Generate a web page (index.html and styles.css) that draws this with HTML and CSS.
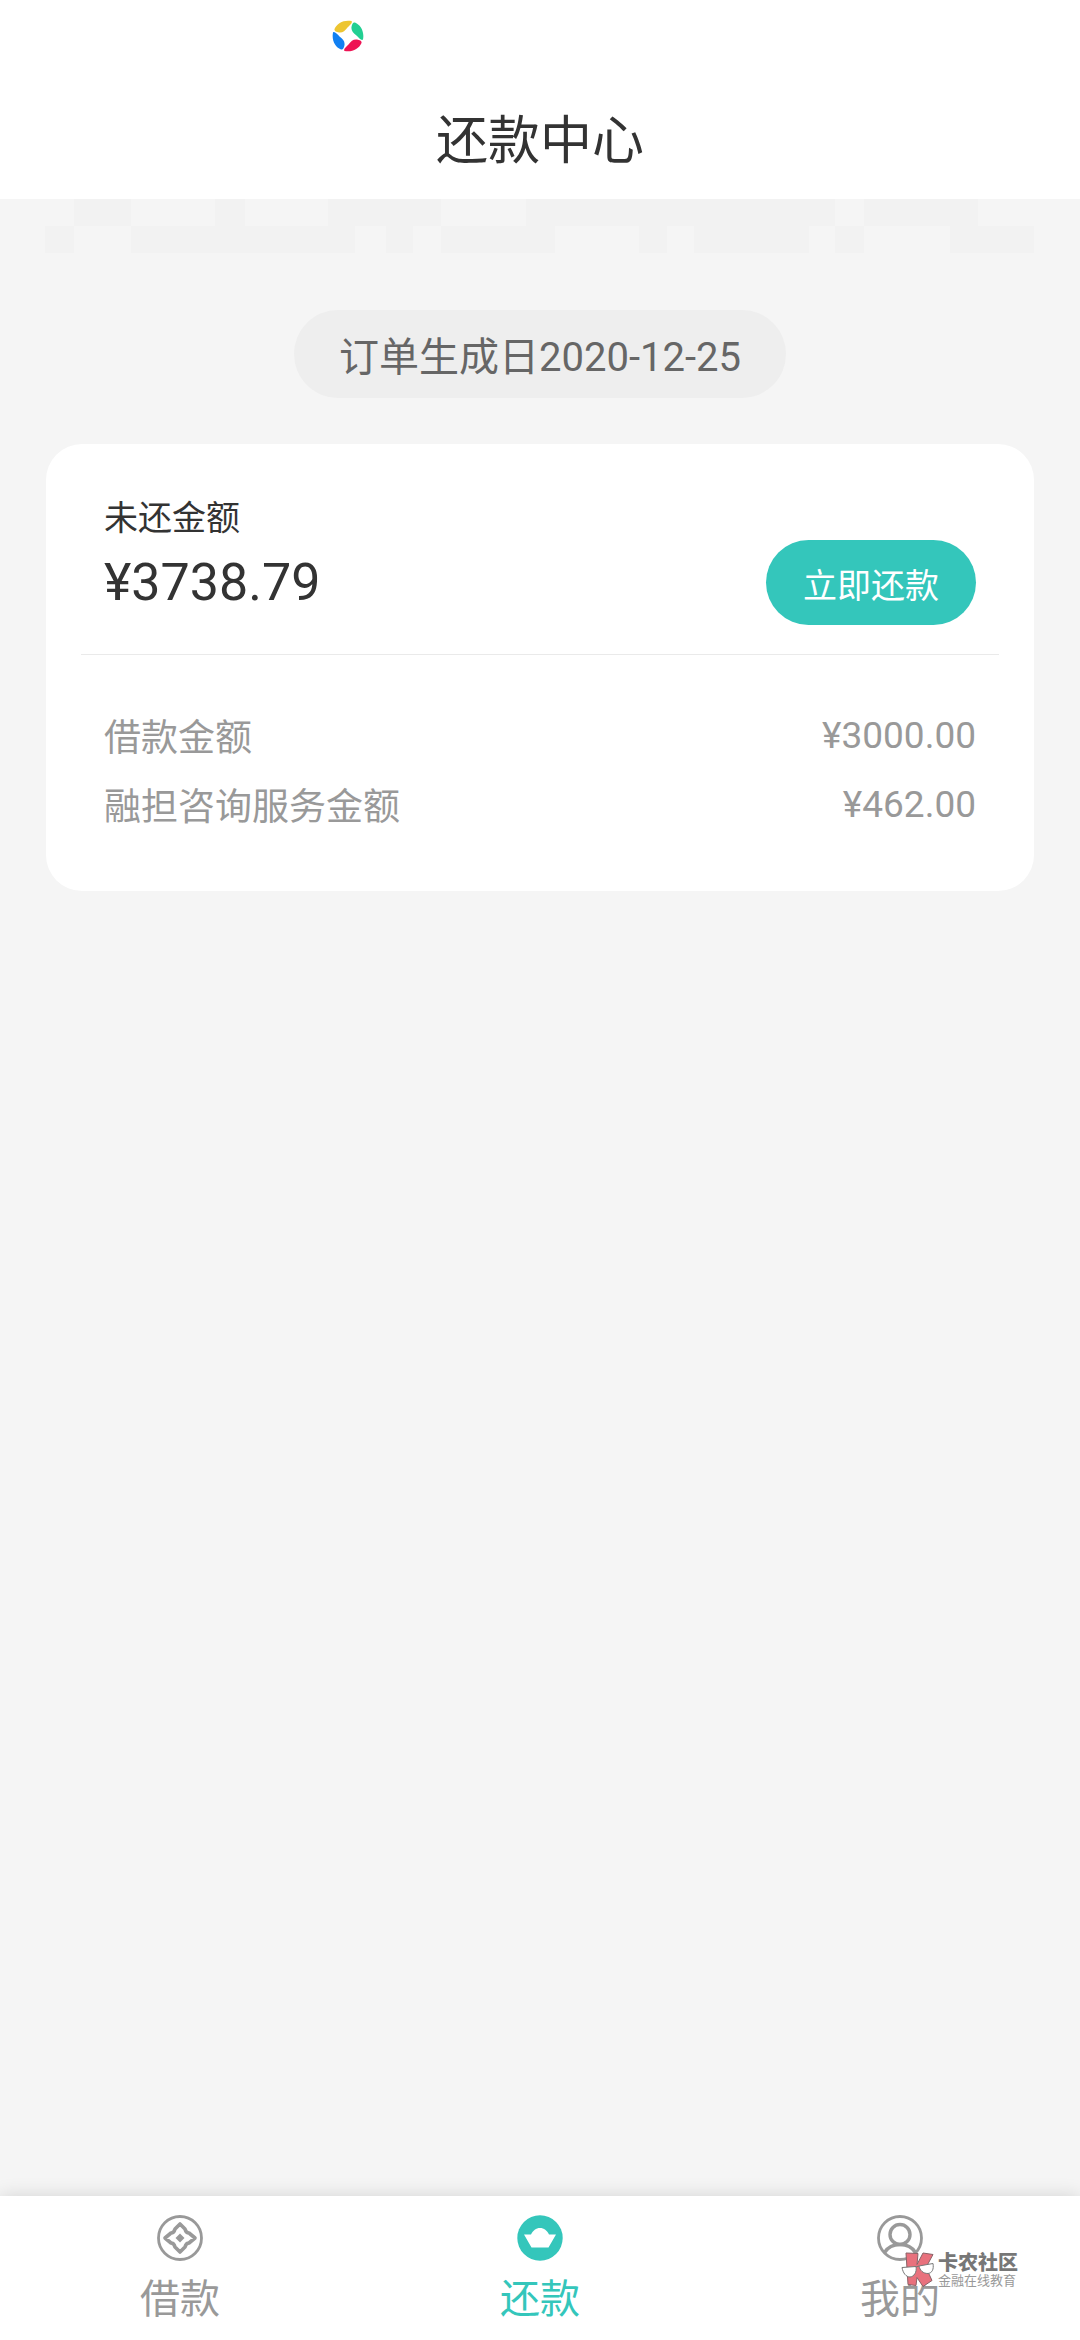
FILE: index.html
```html
<!DOCTYPE html>
<html lang="zh-CN">
<head>
<meta charset="utf-8">
<meta name="viewport" content="width=device-width, initial-scale=1">
<title>还款中心</title>
<link rel="stylesheet" href="styles.css">
</head>
<body>
<header class="header">
  <div class="status">
    <svg class="status-icon" viewBox="0 0 32 32" aria-hidden="true">
      <defs>
        <path id="petal" d="M23 2.500C29 5 32.500 12 31 19.500C29.500 21 27 18 24.500 15.500C21 13 19 10.500 19.500 7C20 4 21 2 23 2.500z"/>
      </defs>
      <use href="#petal" fill="#22cf92"/>
      <use href="#petal" fill="#ee1454" transform="rotate(90 16 16)"/>
      <use href="#petal" fill="#1180f2" transform="rotate(180 16 16)"/>
      <use href="#petal" fill="#edc531" transform="rotate(270 16 16)"/>
    </svg>
  </div>
  <h1 class="title">还款中心</h1>
</header>
<main class="main">
  <svg class="mosaic" viewBox="0 0 1080 54" preserveAspectRatio="none" aria-hidden="true">
    <path d="M74 0h57v27H74zM215 0h30v27h-30zM328 0h113v27H328zM526 0h309v27H526zM864 0h114v27H864z"/>
    <path d="M45 27h29v27H45zM131 27h224v27H131zM386 27h27v27h-27zM441 27h114v27H441zM639 27h28v27h-28zM694 27h115v27H694zM835 27h29v27h-29zM950 27h84v27h-84z"/>
  </svg>
  <p class="date">订单生成日2020-12-25</p>
  <section class="card">
    <div class="due">
      <div class="due-text">
        <h2 class="due-label">未还金额</h2>
        <p class="due-amount">¥3738.79</p>
      </div>
      <button class="pay" type="button">立即还款</button>
    </div>
    <dl class="details">
      <div class="row"><dt class="name">借款金额</dt><dd class="value">¥3000.00</dd></div>
      <div class="row"><dt class="name">融担咨询服务金额</dt><dd class="value">¥462.00</dd></div>
    </dl>
  </section>
</main>
<nav class="tabs">
  <a class="tab" href="#loan">
    <svg class="tab-icon" viewBox="0 0 46 46" aria-hidden="true">
      <g fill="none" stroke="#999">
        <circle cx="23" cy="23" r="21.500" stroke-width="2.800"/>
        <path stroke-width="3.600" stroke-linejoin="round" d="M23 9l5 5q1 4 4 4l6 5-6 5q-3 0-4 4l-5 5-5-5q-1-4-4-4l-6-5 6-5q3 0 4-4z"/>
      </g>
      <path fill="#999" d="M23 18.500l4.500 4.500-4.500 4.500-4.500-4.500z"/>
    </svg>
    <span>借款</span>
  </a>
  <a class="tab tab-active" href="#repay" aria-current="page">
    <svg class="tab-icon" viewBox="0 0 46 46" aria-hidden="true">
      <circle cx="23" cy="23" r="22.700" fill="#34c6bb"/>
      <path fill="#fff" d="M7 19.500h7c2-4 5-6.500 9-6.500s7 2.500 9 6.500h7L31.500 32.500h-17z"/>
    </svg>
    <span>还款</span>
  </a>
  <a class="tab" href="#mine">
    <svg class="tab-icon" viewBox="0 0 46 46" aria-hidden="true">
      <g fill="none" stroke="#999">
        <circle cx="23" cy="23" r="21.500" stroke-width="2.800"/>
        <circle cx="23" cy="19.500" r="10" stroke-width="3.400"/>
        <path stroke-width="3.400" d="M7.500 37.500C11 32 17 29.500 23 29.500s12 2.500 15.500 8"/>
      </g>
    </svg>
    <span>我的</span>
  </a>
  <div class="watermark">
    <svg class="mark" viewBox="0 0 34 36" aria-hidden="true">
      <path fill="#e8717d" stroke="#8a6267" d="M5 1l12 .5-1 11L22 1l10 1.500-7 13 6 13-9 6-6-9-1 8-8-1z"/>
      <g fill="#fff" stroke="#777">
        <path d="M1 15.500l14-1c1 6-2 10-6 10.500-4 0-7-4-8-9.500z"/>
        <path d="M18 14l14-2.500c1 6-1 9.500-5 10-5 0-8-3-9-7.500z"/>
        <path fill="none" d="M15 15l3-1"/>
      </g>
    </svg>
    <div class="mark-text">
      <strong class="mark-name">卡农社区</strong>
      <span class="mark-sub">金融在线教育</span>
    </div>
  </div>
</nav>
</body>
</html>
```
FILE: styles.css
```css
* {
  box-sizing: border-box;
}

body {
  display: flex;
  flex-direction: column;
  min-height: 100vh;
  margin: 0;
  background: #f5f5f5;
  color: #333;
  font-family: Roboto, "Noto Sans CJK SC", sans-serif;
}

h1, h2, p, dl, dd {
  margin: 0;
  font-weight: 400;
}

.header {
  background: #fff;
}

.status {
  display: flex;
  height: 80px;
  padding: 20px 332px;
}

.status-icon {
  width: 32px;
  height: 32px;
}

.title {
  padding-top: 5px;
  font-size: 52px;
  line-height: 114px;
  text-align: center;
}

.main {
  display: flex;
  flex: 1;
  flex-direction: column;
  align-items: center;
}

.mosaic {
  width: 100%;
  height: 54px;
  fill: #f2f2f2;
}

.date {
  margin-top: 57px;
  padding: 8px 45px 0;
  border-radius: 44px;
  background: #eee;
  color: #666;
  font-size: 40px;
  line-height: 80px;
}

.card {
  align-self: stretch;
  margin: 46px;
  padding: 47px 35px 52px;
  border-radius: 36px;
  background: #fff;
}

.due {
  display: flex;
  align-items: flex-end;
  justify-content: space-between;
  padding: 0 23px 29px;
  border-bottom: 1px solid #eaeaea;
}

.due-label {
  font-size: 34px;
  line-height: 54px;
}

.due-amount {
  padding-bottom: 4px;
  font-size: 52px;
  line-height: 76px;
}

.pay {
  width: 210px;
  height: 85px;
  padding: 2px 0 0;
  border: 0;
  border-radius: 43px;
  background: #34c6bb;
  color: #fff;
  font-family: inherit;
  font-size: 34px;
}

.details {
  padding: 46px 23px 0;
  color: #999;
  font-size: 37px;
}

.row {
  display: flex;
  justify-content: space-between;
  line-height: 69px;
}

.name {
  padding-top: 6px;
  line-height: 63px;
}

.tabs {
  position: sticky;
  bottom: 0;
  display: flex;
  height: 144px;
  background: #fff;
  box-shadow: 0 0 18px rgba(0, 0, 0, 0.14);
}

.tab {
  display: flex;
  flex: 1;
  flex-direction: column;
  align-items: center;
  gap: 9px;
  padding-top: 19px;
  color: #999;
  font-size: 40px;
  line-height: 60px;
  text-decoration: none;
}

.tab-active {
  color: #34c6bb;
}

.tab-icon {
  width: 46px;
  height: 46px;
}

.watermark {
  position: absolute;
  top: 56px;
  right: 62px;
  display: flex;
  gap: 3px;
  pointer-events: none;
}

.mark {
  width: 34px;
  height: 36px;
}

.mark-text {
  display: flex;
  flex-direction: column;
  color: #777;
}

.mark-name {
  font-size: 20px;
  font-weight: 900;
  line-height: 22px;
}

.mark-sub {
  color: #999;
  font-size: 13px;
  line-height: 14px;
}
```
